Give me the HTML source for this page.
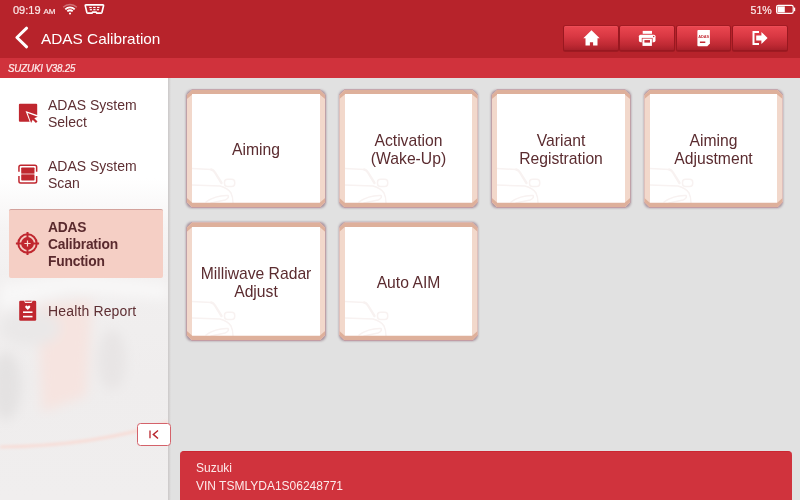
<!DOCTYPE html>
<html lang="en">
<head>
<meta charset="utf-8">
<title>ADAS Calibration</title>
<style>
*{box-sizing:border-box;margin:0;padding:0}
html,body{width:800px;height:500px;overflow:hidden;background:#e1e1e1;font-family:"Liberation Sans",sans-serif;}
#app{will-change:transform;position:relative;width:800px;height:500px;overflow:hidden;background:#e1e1e1}
.abs{position:absolute}
#top{position:absolute;left:0;top:0;width:800px;height:58px;background:#b7232b}
#sub{position:absolute;left:0;top:58px;width:800px;height:20px;background:#d0323c}
#sub span{position:absolute;left:8px;top:1px;line-height:19px;font-size:9.7px;font-style:italic;color:#fdecec;letter-spacing:-0.12px;white-space:nowrap;-webkit-text-stroke:.22px #fdecec;transform:scaleY(1.06);transform-origin:0 52%}
#time{position:absolute;left:13px;top:3px;font-size:11px;line-height:14px;color:#fbe8e8;white-space:nowrap;-webkit-text-stroke:.2px #fbe8e8}
#time small{font-size:8px;margin-left:3px}
#batt{position:absolute;left:750.5px;top:3px;font-size:10.6px;line-height:14px;color:#fbe8e8;white-space:nowrap;-webkit-text-stroke:.2px #fbe8e8}
#title{position:absolute;left:41px;top:28.5px;font-size:15.35px;line-height:20px;color:#fff;white-space:nowrap}
.tb{position:absolute;top:26px;width:53.6px;height:23.6px;border-radius:1.5px;background:linear-gradient(#f0525c 0,#e9454f 1.2px,#d93843 42%,#c02a34 78%,#a9202a 100%);box-shadow:0 0 0 1px rgba(150,22,30,.62),0 1px 0 1px rgba(120,15,22,.4)}
.tb svg{position:absolute;left:-0.6px;top:-1px}
#side{position:absolute;left:0;top:78px;width:167.5px;height:422px;background:#fff;overflow:hidden}
#sideshadow{position:absolute;left:167.5px;top:78px;width:3.5px;height:422px;background:linear-gradient(90deg,#cbc8c8,#d6d4d4 50%,#e1e1e1)}
.mi{position:absolute;left:48px;font-size:14px;line-height:17px;color:#5e2f33;white-space:nowrap}
.sel{position:absolute;left:9px;top:209px;width:154px;height:69px;background:#f5cfc5;border-top:1px solid #d3a29c;border-radius:2px}
.tile{position:absolute;width:139.4px;height:118.6px}
.tile s{position:absolute;left:.2px;right:.2px;top:.6px;bottom:-.5px;background:rgba(105,70,88,.5);border-radius:6px;filter:blur(.9px)}
.tile u{position:absolute;left:0;top:0;width:100%;height:100%;background:#c29ca4;clip-path:polygon(5.6px 0,calc(100% - 5.6px) 0,100% 5.6px,100% calc(100% - 5.6px),calc(100% - 5.6px) 100%,5.6px 100%,0 calc(100% - 5.6px),0 5.6px)}
.tile.r2{height:119px}
.tile b{position:absolute;left:.6px;top:.6px;right:.6px;bottom:.6px;font-weight:normal;background:#f2d8cb;clip-path:polygon(5.3px 0,calc(100% - 5.3px) 0,100% 5.3px,100% calc(100% - 5.3px),calc(100% - 5.3px) 100%,5.3px 100%,0 calc(100% - 5.3px),0 5.3px);display:flex;align-items:center;justify-content:center;text-align:center;font-size:15.7px;line-height:18px;color:#5b2c30}
.tile b::before{content:"";position:absolute;left:0;top:0;width:100%;height:10px;background:#deb09b;clip-path:polygon(0 0,100% 0,100% 9.2px,calc(100% - 5.4px) 4.5px,5.4px 4.5px,0 9.2px)}
.tile b::after{content:"";position:absolute;left:0;bottom:0;width:100%;height:10px;background:#deb09b;clip-path:polygon(0 100%,100% 100%,100% .8px,calc(100% - 5.4px) 5.5px,5.4px 5.5px,0 .8px)}
.tile i{position:absolute;left:5.4px;right:5.4px;top:4.5px;bottom:4.5px;background:#fff;overflow:hidden}
.tile span{position:relative;top:1.2px}
.tile.r2 span{top:1.6px}
.tile svg{position:absolute;left:0;bottom:0}
#bot{position:absolute;left:180px;top:450.5px;width:612px;height:50px;background:#d0333d;border-radius:4px 4px 0 0;border-top:1px solid #cb2631}
#bot div{position:absolute;left:16px;font-size:12px;line-height:14px;color:#fdeaea;white-space:nowrap}
#kbtn{position:absolute;left:137px;top:423px;width:34px;height:23px;background:#fff;border:1px solid #d4626a;border-radius:3.5px}
</style>
</head>
<body>
<div id="app">
  <div id="top">
    <div id="time">09:19<small>AM</small></div>
    <svg class="abs" style="left:62px;top:3px" width="16" height="12" viewBox="0 0 16 12">
      <path d="M1.2 4.2 A9.8 9.8 0 0 1 14.8 4.2" fill="none" stroke="#fff" stroke-opacity=".35" stroke-width="1.4"/>
      <path d="M3.3 6.3 A6.7 6.7 0 0 1 12.7 6.3" fill="none" stroke="#fff" stroke-width="1.8"/>
      <path d="M5.3 8.4 A3.8 3.8 0 0 1 10.7 8.4" fill="none" stroke="#fff" stroke-width="1.8"/>
      <circle cx="8" cy="10.5" r="1.1" fill="#fff"/>
    </svg>
    <svg class="abs" style="left:84.2px;top:3.2px" width="20.8" height="12" viewBox="0 0 22 12" preserveAspectRatio="none">
      <path d="M2.2 1.8 H19.8 Q20.9 1.8 20.6 2.9 L19 9.2 Q18.7 10.2 17.7 10.2 H13.6 L12.8 9 H9.2 L8.4 10.2 H4.3 Q3.3 10.2 3 9.2 L1.4 2.9 Q1.1 1.8 2.2 1.8 Z" fill="none" stroke="#fff" stroke-width="1.75" stroke-linejoin="round"/>
      <g fill="#fff"><rect x="5.6" y="3.9" width="2.6" height="1.2"/><rect x="9.7" y="3.9" width="2.6" height="1.2"/><rect x="13.8" y="3.9" width="2.6" height="1.2"/><rect x="6.1" y="6.1" width="2.4" height="1.2"/><rect x="9.8" y="6.1" width="2.4" height="1.2"/><rect x="13.5" y="6.1" width="2.4" height="1.2"/></g>
    </svg>
    <div id="batt">51%</div>
    <svg class="abs" style="left:775px;top:4px" width="21" height="11" viewBox="0 0 21 11">
      <rect x="1.6" y="1.4" width="16.6" height="8" rx="1.6" fill="none" stroke="#fff" stroke-width="1.2"/>
      <rect x="2.6" y="2.4" width="7.2" height="6" fill="#fff"/>
      <rect x="18.9" y="3.6" width="1.3" height="3.6" fill="#fff"/>
    </svg>
    <svg class="abs" style="left:14px;top:25px" width="18" height="26" viewBox="0 0 18 26">
      <path d="M12.6 3.2 L2.9 12.5 L12.6 21.8" fill="none" stroke="#fff" stroke-width="3" stroke-linecap="round" stroke-linejoin="round"/>
    </svg>
    <div id="title">ADAS Calibration</div>

    <div class="tb" style="left:564.2px"><svg width="55" height="26" viewBox="0 0 55 26"><path d="M27.5 5.3 L19.3 13.3 H21.5 V20.5 H25.9 V17.3 H29.1 V20.5 H33.5 V13.3 H35.7 Z" fill="#fff"/></svg></div>
    <div class="tb" style="left:620.4px"><svg width="55" height="26" viewBox="0 0 55 26"><rect x="22.7" y="5.9" width="9.3" height="2.9" fill="#fff"/><rect x="18.9" y="9.7" width="16.6" height="7.5" rx="1.6" fill="#fff"/><rect x="21.8" y="12.9" width="10.8" height="4.4" fill="#cd303b"/><rect x="22.5" y="13.6" width="9.4" height="7.3" fill="#fff"/><rect x="24.4" y="15.1" width="5.6" height="2.5" fill="#c62c36"/><circle cx="33.7" cy="11.6" r=".75" fill="#c62c36"/></svg></div>
    <div class="tb" style="left:676.6px"><svg width="55" height="26" viewBox="0 0 55 26"><path d="M22.3 5 H33.9 V18.6 L31.3 21.2 H22.3 Q21.4 21.2 21.4 20.3 V5.9 Q21.4 5 22.3 5 Z" fill="#fff"/><text x="27.7" y="12.6" font-size="3.9" font-weight="bold" text-anchor="middle" fill="#c32a34" font-family="Liberation Sans, sans-serif">ADAS</text><rect x="23.9" y="16.5" width="5.4" height="1.5" fill="#c32a34"/></svg></div>
    <div class="tb" style="left:732.9px;width:54px"><svg width="55" height="26" viewBox="0 0 55 26"><path d="M27 7 H21.5 V19 H27" fill="none" stroke="#fff" stroke-width="2"/><path d="M24.2 10.6 H29.4 V6.9 L35.6 13 L29.4 19.1 V15.4 H24.2 Z" fill="#fff"/></svg></div>
  </div>
  <div id="sub"><span>SUZUKI V38.25</span></div>

  <div id="side">
    <div class="abs" style="left:0;top:0;width:168px;height:422px;background:linear-gradient(180deg,#fff 0px,#fff 100px,#f6f4f4 150px,#f1efef 205px,#efeded 300px,#f0eeee 422px)"></div>
    <svg class="abs" style="left:0;top:0" width="168" height="422" viewBox="0 0 168 422">
      <defs><filter id="bl" x="-30%" y="-30%" width="160%" height="160%"><feGaussianBlur stdDeviation="6"/></filter><filter id="bl2" x="-10%" y="-50%" width="120%" height="200%"><feGaussianBlur stdDeviation="1.6"/></filter></defs>
      <g filter="url(#bl)">
        <polygon points="38,228 92,222 86,318 42,334" fill="#f6e4e0"/>
        <ellipse cx="112" cy="282" rx="14" ry="30" fill="#e8e5e5"/>
        <ellipse cx="6" cy="308" rx="15" ry="34" fill="#e4e2e2"/>
        <polygon points="0,205 80,196 168,205 168,222 70,214 0,232" fill="#f8f7f7"/>
        <ellipse cx="30" cy="250" rx="30" ry="18" fill="#eae8e8"/>
      </g>
      <path d="M0 369 Q95 368 168 344" fill="none" stroke="#f9d9d2" stroke-width="2.6" filter="url(#bl2)"/>
    </svg>
  </div>
  <div id="sideshadow"></div>

  <!-- menu items (coordinates relative to app) -->
  <svg class="abs" style="left:18px;top:103px" width="22" height="22" viewBox="0 0 22 22">
    <path d="M1.9 .8 H18.2 Q19.2 .8 19.2 1.8 V12.1 L7.6 7.9 L11.7 18.8 H1.9 Q.9 18.8 .9 17.8 V1.8 Q.9 .8 1.9 .8 Z" fill="#c0272f"/>
    <path d="M9.6 10.1 L19.7 13.8 L16.3 15.2 L19.5 18.4 L17.9 20 L14.7 16.8 L13.1 19.9 Z" fill="#c0272f"/>
  </svg>
  <div class="mi" style="top:96.5px">ADAS System<br>Select</div>

  <svg class="abs" style="left:17px;top:164px" width="22" height="21" viewBox="0 0 22 21">
    <path d="M1.95 7.7 V3 Q1.95 1.25 3.7 1.25 H17.9 Q19.65 1.25 19.65 3 V7.7 M1.95 11.9 V17.2 Q1.95 18.95 3.7 18.95 H17.9 Q19.65 18.95 19.65 17.2 V11.9" fill="none" stroke="#c0272f" stroke-width="1.5"/>
    <rect x="4.2" y="3.5" width="13.3" height="5.8" rx=".7" fill="#c0272f"/>
    <rect x="4.2" y="10.4" width="13.3" height="6.1" rx=".7" fill="#c0272f"/>
    <rect x="4.2" y="9.3" width="13.3" height="1.1" fill="#c0272f" fill-opacity=".75"/>
  </svg>
  <div class="mi" style="top:158px">ADAS System<br>Scan</div>

  <div class="sel"></div>
  <svg class="abs" style="left:15.3px;top:231.4px" width="25" height="25" viewBox="0 0 25 25">
    <circle cx="12.5" cy="12.5" r="9.2" fill="none" stroke="#c0272f" stroke-width="2"/>
    <circle cx="12.5" cy="12.5" r="6.4" fill="#c0272f"/>
    <path d="M12.5 .9 V7 M12.5 18 V24.1 M.9 12.5 H7 M18 12.5 H24.1" stroke="#c0272f" stroke-width="2"/>
    <path d="M12.5 9.4 V15.6 M9.4 12.5 H15.6" stroke="#f9dcd5" stroke-width="1.2"/>
  </svg>
  <div class="mi" style="top:218.5px;font-weight:bold;color:#5a2a2e;font-size:13.8px;line-height:17px;letter-spacing:-0.2px">ADAS<br>Calibration<br>Function</div>

  <svg class="abs" style="left:19px;top:299px" width="19" height="23" viewBox="0 0 19 23">
    <path d="M1.5 1.7 H15.9 Q17.2 1.7 17.2 3 V20.4 Q17.2 21.7 15.9 21.7 H1.5 Q.2 21.7 .2 20.4 V3 Q.2 1.7 1.5 1.7 Z" fill="#c0272f"/>
    <path d="M4.9 1.2 H13.8 L12.6 4 H6.1 Z" fill="#fbeeee"/>
    <rect x="6.2" y="1.7" width="6.3" height="1" fill="#c0272f"/>
    <path d="M8.75 11 L6.5 8.7 Q5.7 7.4 6.8 6.7 Q7.9 6.3 8.75 7.5 Q9.6 6.3 10.7 6.7 Q11.8 7.4 11 8.7 Z" fill="#fff"/>
    <rect x="4" y="12.4" width="9.5" height="1.6" fill="#fff"/>
    <rect x="4" y="16.8" width="9.5" height="1.6" fill="#fff"/>
  </svg>
  <div class="mi" style="top:303px;letter-spacing:.15px">Health Report</div>

  <div id="kbtn"><svg class="abs" style="left:0;top:0" width="32" height="21" viewBox="0 0 32 21"><path d="M12 6.4 V14.2" stroke="#b8242c" stroke-width="1.3" fill="none"/><path d="M20 6.5 L15.3 10.4 L20 14.5" stroke="#b8242c" stroke-width="1.4" fill="none"/></svg></div>

  <!-- tiles -->
  <div class="tile" style="left:186.3px;top:89.3px"><s></s><u></u><b><i><svg width="60" height="50" viewBox="0 0 60 50"><g fill="none" stroke="#f8f2f1" stroke-width="1.5" stroke-linecap="round" stroke-linejoin="round"><path d="M0 15.5 L19.3 16.5"/><path d="M19.3 16.5 Q21.5 17 23 19.5 L29.5 30" stroke-width="2.4"/><rect x="32.5" y="26.3" width="10.2" height="7.2" rx="3"/><path d="M0 32 L28 33 Q36 35 39 40 Q41 44 41 50"/><path d="M14 49 Q24 42 36 42.5 Q37.5 45 33 47 Q26 48.5 19 50"/></g></svg></i><span>Aiming</span></b></div>
  <div class="tile" style="left:338.8px;top:89.3px"><s></s><u></u><b><i><svg width="60" height="50" viewBox="0 0 60 50"><g fill="none" stroke="#f8f2f1" stroke-width="1.5" stroke-linecap="round" stroke-linejoin="round"><path d="M0 15.5 L19.3 16.5"/><path d="M19.3 16.5 Q21.5 17 23 19.5 L29.5 30" stroke-width="2.4"/><rect x="32.5" y="26.3" width="10.2" height="7.2" rx="3"/><path d="M0 32 L28 33 Q36 35 39 40 Q41 44 41 50"/><path d="M14 49 Q24 42 36 42.5 Q37.5 45 33 47 Q26 48.5 19 50"/></g></svg></i><span>Activation<br>(Wake-Up)</span></b></div>
  <div class="tile" style="left:491.3px;top:89.3px"><s></s><u></u><b><i><svg width="60" height="50" viewBox="0 0 60 50"><g fill="none" stroke="#f8f2f1" stroke-width="1.5" stroke-linecap="round" stroke-linejoin="round"><path d="M0 15.5 L19.3 16.5"/><path d="M19.3 16.5 Q21.5 17 23 19.5 L29.5 30" stroke-width="2.4"/><rect x="32.5" y="26.3" width="10.2" height="7.2" rx="3"/><path d="M0 32 L28 33 Q36 35 39 40 Q41 44 41 50"/><path d="M14 49 Q24 42 36 42.5 Q37.5 45 33 47 Q26 48.5 19 50"/></g></svg></i><span>Variant<br>Registration</span></b></div>
  <div class="tile" style="left:643.8px;top:89.3px"><s></s><u></u><b><i><svg width="60" height="50" viewBox="0 0 60 50"><g fill="none" stroke="#f8f2f1" stroke-width="1.5" stroke-linecap="round" stroke-linejoin="round"><path d="M0 15.5 L19.3 16.5"/><path d="M19.3 16.5 Q21.5 17 23 19.5 L29.5 30" stroke-width="2.4"/><rect x="32.5" y="26.3" width="10.2" height="7.2" rx="3"/><path d="M0 32 L28 33 Q36 35 39 40 Q41 44 41 50"/><path d="M14 49 Q24 42 36 42.5 Q37.5 45 33 47 Q26 48.5 19 50"/></g></svg></i><span>Aiming<br>Adjustment</span></b></div>
  <div class="tile r2" style="left:186.3px;top:221.9px"><s></s><u></u><b><i><svg width="60" height="50" viewBox="0 0 60 50"><g fill="none" stroke="#f8f2f1" stroke-width="1.5" stroke-linecap="round" stroke-linejoin="round"><path d="M0 15.5 L19.3 16.5"/><path d="M19.3 16.5 Q21.5 17 23 19.5 L29.5 30" stroke-width="2.4"/><rect x="32.5" y="26.3" width="10.2" height="7.2" rx="3"/><path d="M0 32 L28 33 Q36 35 39 40 Q41 44 41 50"/><path d="M14 49 Q24 42 36 42.5 Q37.5 45 33 47 Q26 48.5 19 50"/></g></svg></i><span>Milliwave Radar<br>Adjust</span></b></div>
  <div class="tile r2" style="left:338.8px;top:221.9px"><s></s><u></u><b><i><svg width="60" height="50" viewBox="0 0 60 50"><g fill="none" stroke="#f8f2f1" stroke-width="1.5" stroke-linecap="round" stroke-linejoin="round"><path d="M0 15.5 L19.3 16.5"/><path d="M19.3 16.5 Q21.5 17 23 19.5 L29.5 30" stroke-width="2.4"/><rect x="32.5" y="26.3" width="10.2" height="7.2" rx="3"/><path d="M0 32 L28 33 Q36 35 39 40 Q41 44 41 50"/><path d="M14 49 Q24 42 36 42.5 Q37.5 45 33 47 Q26 48.5 19 50"/></g></svg></i><span>Auto AIM</span></b></div>

  <div id="bot"><div style="top:9px">Suzuki</div><div style="top:27px">VIN TSMLYDA1S06248771</div></div>
</div>
</body>
</html>
